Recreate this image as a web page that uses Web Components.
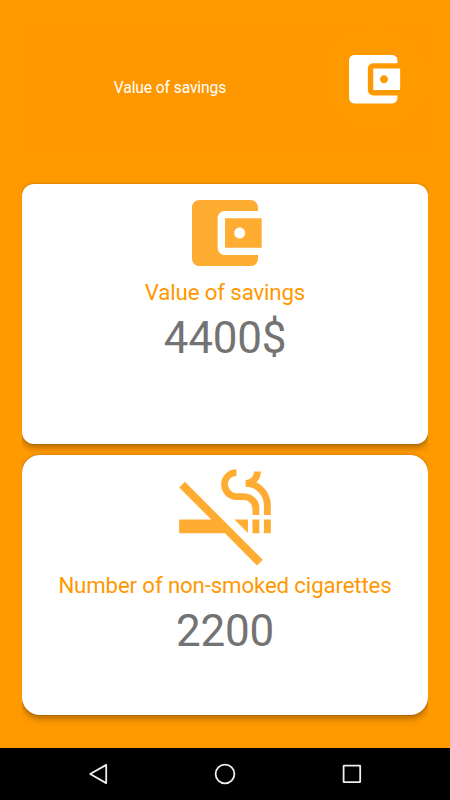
<!DOCTYPE html>
<html lang="en">
<head>
<meta charset="utf-8">
<title>Savings</title>
<style>
    body {
        margin: 0;
        font-family: Roboto, "Liberation Sans", sans-serif;
    }
</style>
</head>
<body>
<savings-app>
    <savings-header slot="header" label="Value of savings"></savings-header>
    <stat-card label="Value of savings" value="4400$" style="--radius: 12px">
        <app-icon name="wallet" style="--size: 88px; margin: 4.7px 0 0 0"></app-icon>
    </stat-card>
    <stat-card label="Number of non-smoked cigarettes" value="2200" style="--radius: 18px">
        <app-icon name="smoke-free" style="--size: 110px; margin: 4.7px 0 0 0"></app-icon>
    </stat-card>
    <nav-bar slot="nav"></nav-bar>
</savings-app>

<script>
"use strict"

const ICONS = {
    "wallet": "M21 18v1c0 1.1-.9 2-2 2H5c-1.11 0-2-.9-2-2V5c0-1.1.89-2 2-2h14c1.1 0 2 .9 2 2v1h-9c-1.11 0-2 .9-2 2v8c0 1.1.89 2 2 2h9zm-9-2h10V8H12v8zm4-2.5c-.83 0-1.5-.67-1.5-1.5s.67-1.5 1.5-1.5 1.5.67 1.5 1.5-.67 1.5-1.5 1.5z",
    "smoke-free": "M2 6l6.99 7H2v3h9.99l7 7 1.26-1.25-17-17zm18.5 7H22v3h-1.5zM18 13h1.5v3H18zm.85-8.12c.62-.61 1-1.45 1-2.38h-1.5c0 1.02-.83 1.85-1.85 1.85v1.5c2.24 0 4 1.83 4 4.07V12H22V9.92c0-2.23-1.28-4.15-3.15-5.04zM14.5 8.7h1.53c1.05 0 1.97.74 1.97 2.05V12h1.5v-1.59c0-1.8-1.6-3.16-3.47-3.16H14.5c-1.02 0-1.85-.98-1.85-2s.83-1.75 1.85-1.75V2a3.35 3.35 0 0 0 0 6.7zm2.5 7.23V13h-2.93z"
};

class AppIcon extends HTMLElement {
    constructor() {
        super();
        this._root = this.attachShadow({ mode: "open" });
    }
    connectedCallback() {
        this._root.innerHTML = `
        <style>
            :host {
                display: block;
                width: var(--size, 24px);
                height: var(--size, 24px);
            }
            svg {
                display: block;
                width: 100%;
                height: 100%;
                fill: currentColor;
            }
        </style>
        <svg viewBox="0 0 24 24"><path d="${ICONS[this.getAttribute("name")]}"/></svg>
        `;
    }
}
window.customElements.define("app-icon", AppIcon);

class SavingsHeader extends HTMLElement {
    constructor() {
        super();
        this._root = this.attachShadow({ mode: "open" });
    }
    connectedCallback() {
        this._root.innerHTML = `
        <style>
            :host {
                display: grid;
                grid-template-columns: 296px 110px;
                height: 129px;
                background: #ff9800;
                color: #fff;
            }
            .label {
                padding-top: 56px;
                text-align: center;
                font-size: 15.6px;
                line-height: 20px;
                letter-spacing: -.1px;
            }
            .badge {
                display: grid;
                place-items: center;
                width: 104px;
                height: 104px;
                margin: 4px 0 0 5px;
                border-radius: 50%;
                background: #ff9900;
            }
        </style>
        <div class="label">${this.getAttribute("label")}</div>
        <div class="badge"><app-icon name="wallet" style="--size: 64.5px; margin: 3px 4px 0 0"></app-icon></div>
        `;
    }
}
window.customElements.define("savings-header", SavingsHeader);

class StatCard extends HTMLElement {
    constructor() {
        super();
        this._root = this.attachShadow({ mode: "open" });
    }
    connectedCallback() {
        this._root.innerHTML = `
        <style>
            /* the shadow is cut off at the left and right edges */
            :host {
                display: block;
                clip-path: inset(-12px 0);
            }
            .card {
                display: flex;
                flex-direction: column;
                align-items: center;
                height: 260px;
                border-radius: var(--radius, 12px);
                background: #fff;
                box-shadow: 0 4px 6px rgba(0, 0, 0, .28), 0 0 2px rgba(0, 0, 0, .3);
                text-align: center;
                white-space: nowrap;
            }
            ::slotted(app-icon) {
                color: #ffac33;
            }
            .label {
                margin-top: 1px;
                font-size: 22.2px;
                line-height: 28px;
                letter-spacing: -.11px;
                color: #ff9800;
            }
            .value {
                margin-top: 6px;
                font-size: 44px;
                line-height: 52px;
                letter-spacing: -.2px;
                color: #737373;
            }
        </style>
        <div class="card">
            <slot></slot>
            <div class="label">${this.getAttribute("label")}</div>
            <div class="value">${this.getAttribute("value")}</div>
        </div>
        `;
    }
}
window.customElements.define("stat-card", StatCard);

class NavBar extends HTMLElement {
    constructor() {
        super();
        this._root = this.attachShadow({ mode: "open" });
    }
    connectedCallback() {
        this._root.innerHTML = `
        <style>
            :host {
                display: flex;
                justify-content: center;
                align-items: center;
                gap: 102.5px;
                height: 52.5px;
                background: #000;
            }
            svg {
                width: 24px;
                height: 24px;
                fill: none;
                stroke: #eee;
                stroke-width: 1.8;
                stroke-linejoin: round;
            }
        </style>
        <svg viewBox="0 0 24 24"><path d="M19.2 2.9v18.2L3.2 12z"/></svg>
        <svg viewBox="0 0 24 24"><circle cx="12" cy="12" r="9.4"/></svg>
        <svg viewBox="0 0 24 24"><rect x="3.6" y="3.6" width="16.6" height="16.6" rx=".5"/></svg>
        `;
    }
}
window.customElements.define("nav-bar", NavBar);

class SavingsApp extends HTMLElement {
    constructor() {
        super();
        this._root = this.attachShadow({ mode: "open" });
    }
    connectedCallback() {
        this._root.innerHTML = `
        <style>
            :host {
                display: flex;
                flex-direction: column;
                width: 450px;
                height: 800px;
                overflow: hidden;
                background: #ff9900;
            }
            .content {
                flex: 1;
                padding: 22px 22px 0;
            }
            .cards {
                display: grid;
                gap: 11px;
                margin-top: 33px;
            }
        </style>
        <div class="content">
            <slot name="header"></slot>
            <div class="cards"><slot></slot></div>
        </div>
        <slot name="nav"></slot>
        `;
    }
}
window.customElements.define("savings-app", SavingsApp);
</script>
</body>
</html>
